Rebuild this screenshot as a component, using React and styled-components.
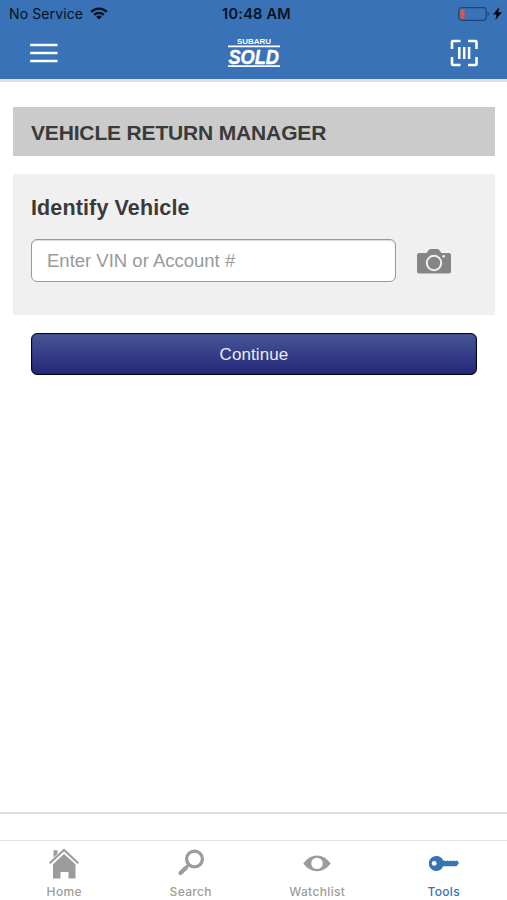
import styled, {createGlobalStyle, css} from 'styled-components';

const GlobalStyle = createGlobalStyle`
  * {
    box-sizing: border-box;
  }

  body {
    margin: 0;
    background-color: #fff;
    font-family: "Liberation Sans", Arial, sans-serif;
  }
`;

const Screen = styled.div`
  display: flex;
  flex-direction: column;
  width: 100%;
  height: 100vh;
  overflow: hidden;
`;

const Header = styled.header`
  height: 82px;
  background-color: #3972b6;
  border-bottom: 3px solid #dfe0e2;
`;

const StatusBar = styled.div`
  display: grid;
  grid-template-columns: 1fr auto 1fr;
  align-items: center;
  height: 27px;
  padding: 0 5px 0 9px;
  color: #07111d;
  font-family: Inter, sans-serif;
`;

const StatusGroup = styled.div`
  display: flex;
  align-items: center;
  gap: ${props => props.gap};
  ${props => props.end && css`
    justify-content: flex-end;
  `}
`;

const Carrier = styled.span`
  font-size: 14px;
  line-height: 18px;
  letter-spacing: 0.12px;
`;

const Clock = styled.span`
  font-size: 14.5px;
  font-weight: 600;
  line-height: 18px;
  letter-spacing: 0.25px;
  margin-left: 2px;
`;

const NavBar = styled.nav`
  display: flex;
  align-items: center;
  justify-content: space-between;
  height: 51px;
  padding: 0 28px 0 29px;
`;

const IconButton = styled.button`
  display: flex;
  padding: 0;
  border: none;
  background: none;
  color: ${props => props.color || '#fff'};
`;

const Content = styled.main`
  flex: 1;
  padding: 25px 12px 0 13px;
`;

const PageTitle = styled.h1`
  display: flex;
  align-items: center;
  height: 49px;
  margin: 0 0 18px;
  padding: 2px 18px 0;
  background-color: #cbcbcb;
  color: #3a3a3a;
  font-size: 21px;
  letter-spacing: -0.16px;
  white-space: nowrap;
`;

const Panel = styled.section`
  height: 141px;
  padding: 20px 18px 0;
  background-color: #f0f0f0;
`;

const PanelTitle = styled.h2`
  margin: 0 0 17px;
  padding-top: 1px;
  color: #3a3a3a;
  font-size: 21.5px;
  line-height: 27px;
  letter-spacing: 0.13px;
`;

const FieldRow = styled.div`
  display: flex;
  align-items: center;
  gap: 21px;
`;

const Input = styled.input`
  width: 365px;
  height: 43px;
  padding: 1px 15px 0;
  border: 1.5px solid #999;
  border-radius: 6px;
  background-color: #fff;
  box-shadow: inset 0 1px 1px rgba(0, 0, 0, 0.15);
  font-family: "Liberation Sans", Arial, sans-serif;
  font-size: 18.5px;

  &::placeholder {
    color: #999;
    opacity: 1;
  }
`;

const SubmitButton = styled.button`
  display: block;
  width: 446px;
  height: 42px;
  margin: 18px 0 0 18px;
  padding: 1px 0 0;
  border: 1px solid #05071f;
  border-radius: 6px;
  background: linear-gradient(#475596, #232779);
  box-shadow: inset 0 0 1px #05071f;
  color: #e8ecff;
  font-family: "Liberation Sans", Arial, sans-serif;
  font-size: 17px;
  letter-spacing: 0.1px;
`;

const BottomStrip = styled.div`
  height: 28px;
  border-top: 2px solid #dedede;
`;

const TabBar = styled.nav`
  display: grid;
  grid-template-columns: repeat(4, 1fr);
  height: 60px;
  padding-left: 1px;
  border-top: 1px solid #e3e3e3;
`;

const Tab = styled.a`
  display: flex;
  flex-direction: column;
  align-items: center;
  padding-top: 6px;
  color: ${props => props.active ? '#3972b6' : '#9c9c9c'};
  font-family: Inter, sans-serif;
  font-size: 12px;
  font-weight: 500;
  line-height: 16px;
  letter-spacing: 0.35px;

  svg {
    margin-bottom: 3px;
  }
`;

const WifiIcon = () => (
  <svg width="18" height="13" viewBox="0 0 18 13" fill="none" stroke="currentColor" strokeWidth="2.4">
    <path d="M1.2 4.8C5.5.5 12.5.5 16.8 4.8" />
    <path d="M4.2 7.8c2.7-2.6 6.9-2.6 9.6 0" />
    <path d="M9 12.5 6.100 9.700q2.900-2.300 5.800 0z" fill="currentColor" stroke="none" />
  </svg>
);

const BatteryIcon = () => (
  <svg width="32" height="14" viewBox="0 0 32 14">
    <rect x="0.700" y="0.700" width="27.500" height="12.600" rx="3" fill="none" stroke="#1f4775" strokeWidth="1.200" />
    <path d="M3.500 2.300H6.500v9.400H3.500Q2.500 11.700 2.500 10.700V3.300Q2.500 2.300 3.500 2.300Z" fill="#e9503f" />
    <path d="M29.500 4.500q3 2.500 0 5z" fill="#1f4775" />
  </svg>
);

const BoltIcon = () => (
  <svg width="9" height="13" viewBox="0 0 9 13">
    <path d="M6.200 0 0 7.400h3.400L2.400 13 9 5.300H5.400z" fill="#050a12" />
  </svg>
);

const MenuIcon = () => (
  <svg width="29" height="22" viewBox="0 0 29 22" stroke="currentColor" strokeWidth="2.600">
    <path d="M1.200 3h27.300M1.200 11h27.300M1.200 19h27.300" />
  </svg>
);

const Logo = () => (
  <svg width="54" height="32" viewBox="0 0 54 32" fill="#fff" fontFamily="Liberation Sans, Arial, sans-serif" fontWeight="700" overflow="visible">
    <text x="10" y="7.200" fontSize="7" textLength="34" lengthAdjust="spacingAndGlyphs">SUBARU</text>
    <path d="M1 8.500h52v1.700H1zM1 28.200h52v1.700H1z" />
    <text x="1.500" y="26.600" fontSize="20.500" fontStyle="italic" textLength="50.500" lengthAdjust="spacingAndGlyphs" stroke="#fff" strokeWidth="0.400">SOLD</text>
  </svg>
);

const ScanIcon = () => (
  <svg width="29" height="28" viewBox="0 0 29 28" fill="none" stroke="currentColor" strokeWidth="2.600">
    <path d="M10.500 2H3Q2 2 2 3v7M18 2H25.500Q26.500 2 26.500 3v7M2 18v7q0 1 1 1h7.500M26.500 18v7q0 1-1 1h-7.500" />
    <path d="M9.300 8v12M14.200 8v12M19.100 8v12" strokeWidth="2.500" />
  </svg>
);

const CameraIcon = () => (
  <svg width="34" height="27" viewBox="0 0 34 27">
    <g transform="translate(0 1.500)">
      <path d="M2 4.500h7.500L12 1.300Q12.500.5 14 .5h6q1.500 0 2 .8l2.500 3.200H32q2 0 2 2V23q0 2-2 2H2q-2 0-2-2V6.500q0-2 2-2z" fill="#858585" />
      <circle cx="17" cy="14.500" r="7.200" fill="none" stroke="#f0f0f0" strokeWidth="2" />
      <circle cx="26.700" cy="7.700" r="1.300" fill="#f0f0f0" />
    </g>
  </svg>
);

const HomeIcon = () => (
  <svg width="32" height="34" viewBox="0 0 32 34">
    <path d="M5.500 10.500V3.200H9.500v3.500z" fill="currentColor" />
    <path d="M1.700 16.300 16 3l14.300 13.300" fill="none" stroke="currentColor" strokeWidth="2.100" />
    <path d="M5 17.200 16 7l11.500 10.200v14.300H20.500V25h-8v6.500H5z" fill="currentColor" />
  </svg>
);

const SearchIcon = () => (
  <svg width="28" height="34" viewBox="0 0 28 34" fill="none" stroke="currentColor">
    <circle cx="17.500" cy="12" r="7.900" strokeWidth="3.300" />
    <path d="m11.500 18-2 2.200" strokeWidth="2.800" />
    <path d="m9 20.700-5.500 5.300" strokeWidth="4.200" strokeLinecap="round" />
  </svg>
);

const EyeIcon = () => (
  <svg width="28" height="34" viewBox="0 0 28 34">
    <path d="M.3 16.500Q6 8.500 14 8.500t13.700 8Q22 24.300 14 24.300T.3 16.500z" fill="currentColor" />
    <circle cx="14" cy="16.400" r="5.700" fill="#fff" />
  </svg>
);

const KeyIcon = () => (
  <svg width="30" height="34" viewBox="0 0 30 34">
    <path d="M7.500 9a7.500 7.500 0 0 1 6.700 4.500h1.300l1.500.7 1.500-.7 1.500.7 1.500-.7 1.500.7 1.500-.7 1.500.7 1.500-.7H28l2 2.600-2.500 3.200H14.200A7.500 7.500 0 1 1 7.500 9z" fill="currentColor" />
    <circle cx="5.200" cy="16.400" r="2.400" fill="#fff" />
  </svg>
);

const tabs = [
  {label: 'Home', Icon: HomeIcon},
  {label: 'Search', Icon: SearchIcon},
  {label: 'Watchlist', Icon: EyeIcon},
  {label: 'Tools', Icon: KeyIcon, active: true},
];

const App = () => {
  return (
    <>
      <GlobalStyle />
      <Screen>
        <Header>
          <StatusBar>
            <StatusGroup gap="7px">
              <Carrier>No Service</Carrier>
              <WifiIcon />
            </StatusGroup>
            <Clock>10:48 AM</Clock>
            <StatusGroup gap="3px" end>
              <BatteryIcon />
              <BoltIcon />
            </StatusGroup>
          </StatusBar>
          <NavBar>
            <IconButton><MenuIcon /></IconButton>
            <Logo />
            <IconButton><ScanIcon /></IconButton>
          </NavBar>
        </Header>

        <Content>
          <PageTitle>VEHICLE RETURN MANAGER</PageTitle>
          <Panel>
            <PanelTitle>Identify Vehicle</PanelTitle>
            <FieldRow>
              <Input placeholder="Enter VIN or Account #" />
              <IconButton><CameraIcon /></IconButton>
            </FieldRow>
          </Panel>
          <SubmitButton>Continue</SubmitButton>
        </Content>

        <BottomStrip />
        <TabBar>
          {tabs.map(({label, Icon, active}) => (
            <Tab key={label} active={active}>
              <Icon />
              {label}
            </Tab>
          ))}
        </TabBar>
      </Screen>
    </>
  );
}

export default App;
